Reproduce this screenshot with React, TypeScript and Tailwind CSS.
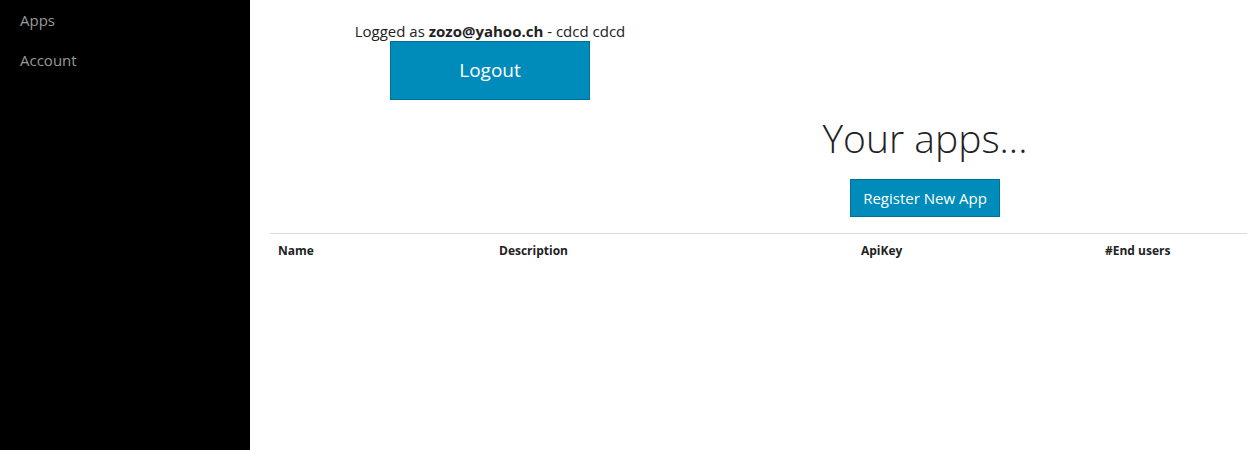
import React from "react";

export default function App() {
  return (
    <div className="flex h-[450px] w-[1247px] overflow-hidden bg-white text-[#222]" style={{ fontFamily: '"Open Sans", sans-serif' }}>
      <aside className="w-[250px] shrink-0 bg-black pt-[10px]">
        <div className="px-5 text-[15px] leading-[20px] text-[#999]">Apps</div>
        <div className="mt-[20px] px-5 text-[15px] leading-[20px] text-[#999]">Account</div>
      </aside>
      <main className="flex-1 min-w-0">
        <div className="flex w-[480px] flex-col items-center pt-[21px]">
          <div className="text-[15px] leading-[20px]">
            Logged as <b className="font-bold">zozo@yahoo.ch</b> - cdcd cdcd
          </div>
          <button className="flex h-[59px] w-[200px] items-center justify-center border border-[#007095] bg-[#008cba] text-[19px] text-white">
            Logout
          </button>
        </div>
        <div className="flex w-[1350px] flex-col items-center">
          <h1 className="mt-[13px] text-[39px] font-light leading-[50px] text-[#222]">Your apps...</h1>
          <button className="mt-[16px] flex h-[38px] w-[150px] items-center justify-center border border-[#007095] bg-[#008cba] text-[15px] text-white">
            Register New App
          </button>
        </div>
        <div className="ml-[20px] mt-[16px] border-t border-[#ddd]">
          <div className="flex pt-[9px] text-[12px] font-bold leading-[16px] text-[#222]">
            <div className="w-[221px] pl-[8px]">Name</div>
            <div className="w-[362px] pl-[8px]">Description</div>
            <div className="w-[244px] pl-[8px]">ApiKey</div>
            <div className="pl-[8px]">#End users</div>
          </div>
        </div>
      </main>
    </div>
  );
}
